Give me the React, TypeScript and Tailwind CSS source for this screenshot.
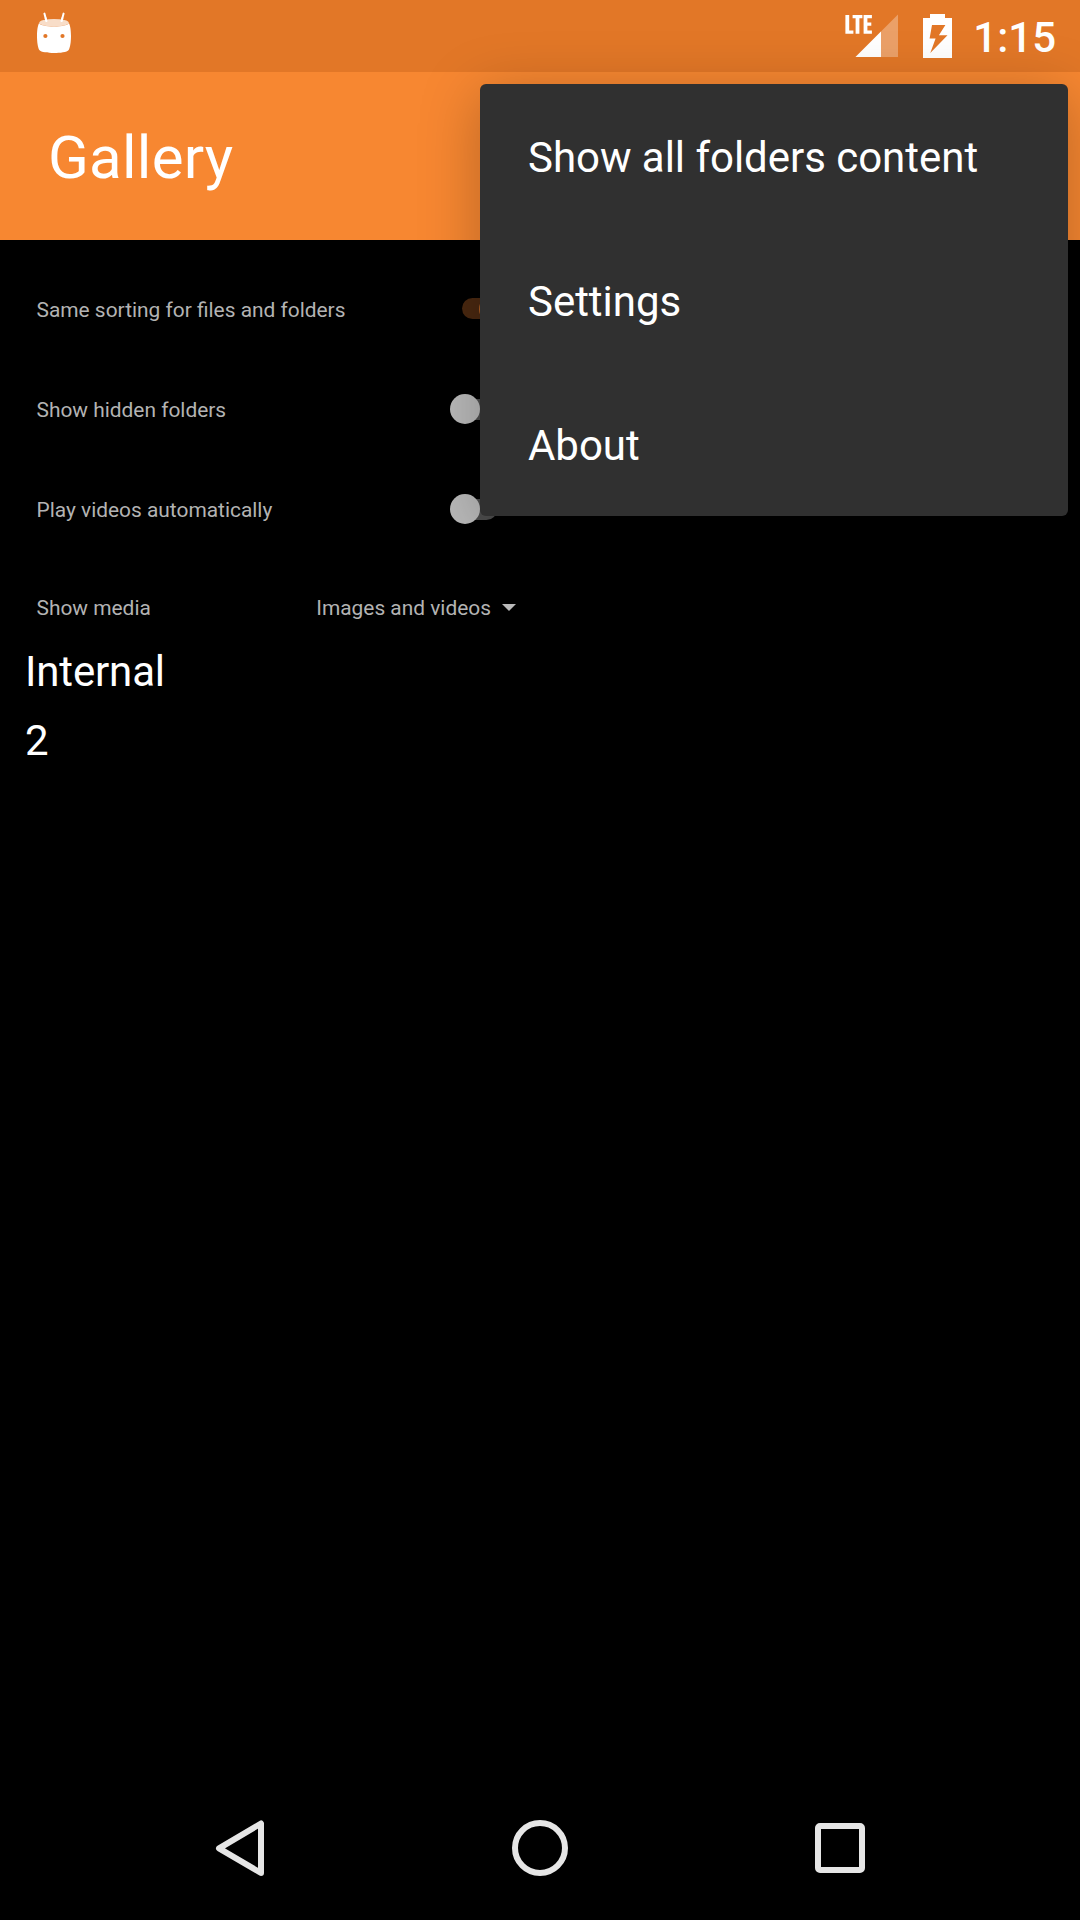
import React from "react";

function MarshmallowIcon() {
  return (
    <svg className="block h-[44px] w-[36px]" viewBox="36 11 36 44" fill="none">
      <path d="M44.4 13.6L46.4 21M63.6 13.6L61.6 21" stroke="#fff" strokeWidth="2" strokeLinecap="round" />
      <path
        fillRule="evenodd"
        fill="#fff"
        d="M39.3 23C38.2 24 37 29 37 36C37 42 37.8 47.5 39.3 50C41 52.3 48 53 54 53C60 53 67 52.3 68.7 50C70.2 47.5 71 42 71 36C71 29 69.8 24 68.7 23C68.6 25 62 26.5 54 26.5C46 26.5 39.4 25 39.3 23ZM45.4 33.9a2.1 2.1 0 1 0 0 4.2a2.1 2.1 0 1 0 0-4.2ZM62.5 33.9a2.1 2.1 0 1 0 0 4.2a2.1 2.1 0 1 0 0-4.2Z"
      />
      <ellipse cx="54" cy="22.8" rx="14.8" ry="3.8" fill="#fff" fillOpacity="0.75" />
      <path d="M45.6 18L46.4 21M62.4 18L61.6 21" stroke="#fff" strokeWidth="1.8" strokeLinecap="round" />
    </svg>
  );
}

function SignalIcon() {
  return (
    <svg className="block h-[46px] w-[56px]" viewBox="844 13 56 46">
      <path d="M898 14.5V57H855.5Z" fill="#fff" fillOpacity="0.3" />
      <path d="M881 31.5V57H855.5Z" fill="#fff" />
      <path d="M845.4 15h3.8v15.4h4.2v3.3h-8zM852.6 15h9.8v3.3h-3v15.4h-3.8V18.3h-3zM863.6 15h8.3v3.3h-4.5v4.2h3.9v3.3h-3.9v4.6h4.5v3.3h-8.3z" fill="#fff" />
    </svg>
  );
}

function BatteryIcon() {
  return (
    <svg className="block h-[44px] w-[30px]" viewBox="922 14 30 44">
      <path
        fillRule="evenodd"
        fill="#fff"
        d="M930 14h15v4h7v40h-29V18h7ZM932 25L929.6 38.6h6L930.3 53L947.5 35.3h-8.6L945.4 25Z"
      />
    </svg>
  );
}

function Toggle({ on = false }: { on?: boolean }) {
  return on ? (
    <div className="relative h-[30px] w-[60px]">
      <div className="absolute left-[12px] top-[4px] h-[21px] w-[34px] rounded-full bg-[#4a2810]" />
      <div className="absolute left-[29px] top-0 size-[30px] rounded-full bg-[#b06024]" />
    </div>
  ) : (
    <div className="relative h-[30px] w-[60px]">
      <div className="absolute left-[12px] top-[5px] h-[21px] w-[35px] rounded-full bg-[#4d4d4d]" />
      <div className="absolute left-[0.3px] top-0 size-[30px] rounded-full bg-[#b9b9b9]" />
    </div>
  );
}

function SettingRow({ label, on }: { label: string; on?: boolean }) {
  return (
    <div className="flex h-[100px] items-center justify-between pl-[36.5px]">
      <span className="pt-[2px] text-[20.9px] leading-[24px]">{label}</span>
      <Toggle on={on} />
    </div>
  );
}

const menuItems = ["Show all folders content", "Settings", "About"];

export default function App() {
  return (
    <div className="relative flex h-[1920px] w-[1080px] flex-col overflow-hidden bg-black font-[Roboto,sans-serif] text-white">
      <header className="flex h-[72px] items-start bg-[#e27727]">
        <div className="pl-9 pt-[11px]"><MarshmallowIcon /></div>
        <div className="ml-auto flex pr-[24px]">
          <div className="pt-[13px]"><SignalIcon /></div>
          <div className="ml-[22px] pt-[14px]"><BatteryIcon /></div>
          <span className="ml-[21px] pt-[13px] text-[42px] font-medium leading-[49px]">1:15</span>
        </div>
      </header>
      <div className="flex h-[168px] items-center bg-[#f78731] pl-12">
        <h1 className="pt-[4px] text-[60px] leading-[70px] tracking-[0.25px]">Gallery</h1>
      </div>

      <main className="flex-1">
        <section className="w-[510px] pt-[19px] text-[#b3b3b3]">
          <SettingRow label="Same sorting for files and folders" on />
          <SettingRow label="Show hidden folders" />
          <SettingRow label="Play videos automatically" />
          <div className="flex h-[96px] items-center pl-[36.5px] text-[20.9px] leading-[24px]">
            <span className="pt-px">Show media</span>
            <span className="ml-auto pt-px">Images and videos</span>
            <svg className="ml-[11px] mr-[-6px] h-[7px] w-[14px]" viewBox="0 0 14 7" fill="#b9b9b9">
              <path d="M0 0h14L7 7z" />
            </svg>
          </div>
        </section>
        <section className="-mt-[8px] pl-[25px] text-[42px] leading-[49px] tracking-[-0.15px]">
          <p>Internal</p>
          <p className="pt-[20px]">2</p>
        </section>
      </main>

      <nav className="flex h-[144px] items-center justify-center">
        <div className="flex w-[300px] justify-center pl-[12px]">
          <svg className="block size-[72px]" viewBox="0 0 72 72" fill="none" stroke="#e6e6e6" strokeWidth="6" strokeLinejoin="round">
            <path d="M51 11.5V61L9 36.3Z" />
          </svg>
        </div>
        <div className="flex w-[300px] justify-center">
          <div className="size-14 rounded-full border-[6px] border-[#e6e6e6]" />
        </div>
        <div className="flex w-[300px] justify-center">
          <div className="size-[50px] rounded-[5px] border-[6px] border-[#e6e6e6]" />
        </div>
      </nav>

      <div className="absolute left-[480px] top-[84px] h-[432px] w-[588px] rounded-[6px] bg-[#303030] shadow-[0_10px_60px_rgba(0,0,0,0.25)]">
        {menuItems.map((item) => (
          <div key={item} className="flex h-36 items-center pl-12 pt-[3px] text-[42px] leading-[49px] tracking-[-0.03px]">
            {item}
          </div>
        ))}
      </div>
    </div>
  );
}
